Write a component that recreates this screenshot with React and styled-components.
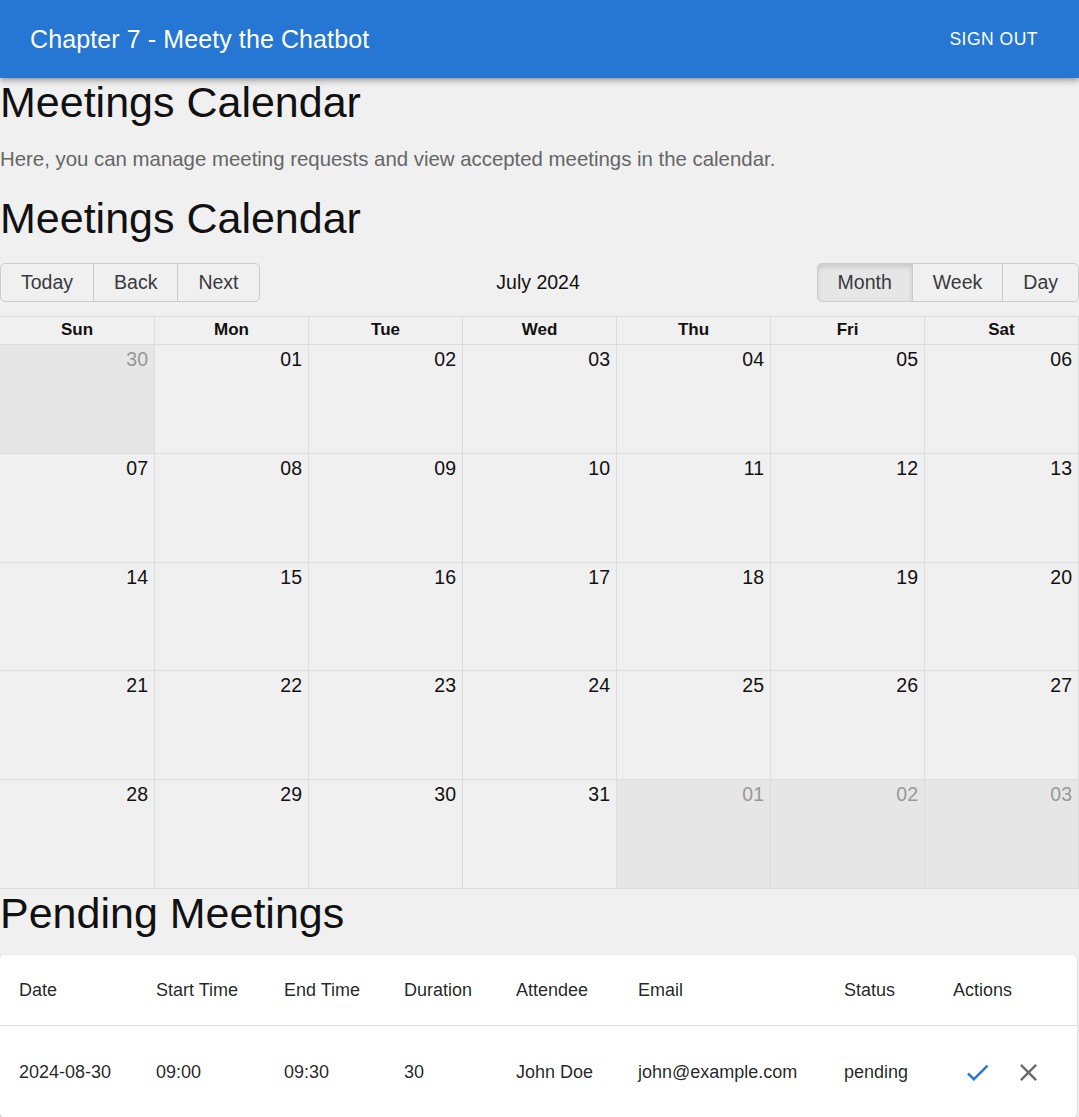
import React from 'react';
import styled, { createGlobalStyle } from 'styled-components';

const GlobalStyle = createGlobalStyle`
    *, *::before, *::after {
        box-sizing: border-box;
    }
    html, body {
        margin: 0;
        padding: 0;
        background-color: #f0f0f0;
        font-family: "Liberation Sans", Arial, sans-serif;
        color: #111;
    }
`;

const weekDays = ['Sun', 'Mon', 'Tue', 'Wed', 'Thu', 'Fri', 'Sat'];

// 5 weeks of July 2024, with days from June / August marked as off range
const buildWeeks = () => {
    const days = [{ n: 30, off: true }];
    for (let d = 1; d <= 31; d++) days.push({ n: d, off: false });
    for (let d = 1; d <= 3; d++) days.push({ n: d, off: true });
    const weeks = [];
    for (let i = 0; i < days.length; i += 7) weeks.push(days.slice(i, i + 7));
    return weeks;
};

const columns = [
    { label: 'Date', width: 137 },
    { label: 'Start Time', width: 128 },
    { label: 'End Time', width: 120 },
    { label: 'Duration', width: 112 },
    { label: 'Attendee', width: 122 },
    { label: 'Email', width: 206 },
    { label: 'Status', width: 109 },
    { label: 'Actions', width: null },
];

const meetings = [
    {
        date: '2024-08-30',
        start: '09:00',
        end: '09:30',
        duration: 30,
        attendee: 'John Doe',
        email: 'john@example.com',
        status: 'pending',
    },
];

const CheckIcon = () => (
    <svg width="29" height="29" viewBox="0 0 24 24" fill="currentColor">
        <path d="M9 16.17 4.83 12l-1.42 1.41L9 19 21 7l-1.41-1.41z" />
    </svg>
);

const CloseIcon = () => (
    <svg width="29" height="29" viewBox="0 0 24 24" fill="currentColor">
        <path d="M19 6.41 17.59 5 12 10.59 6.41 5 5 6.41 10.59 12 5 17.59 6.41 19 12 13.41 17.59 19 19 17.59 13.41 12z" />
    </svg>
);

const App = () => {
    const weeks = buildWeeks();
    return (
        <>
            <GlobalStyle />
            {/* 상단 바 */}
            <AppBar>
                <Title>Chapter 7 - Meety the Chatbot</Title>
                <SignOut>Sign out</SignOut>
            </AppBar>

            <Main>
                <PageTitle>Meetings Calendar</PageTitle>
                <Intro>Here, you can manage meeting requests and view accepted meetings in the calendar.</Intro>
                <SectionTitle>Meetings Calendar</SectionTitle>

                {/* 캘린더 툴바 */}
                <Toolbar>
                    <ButtonGroup>
                        <ToolButton>Today</ToolButton>
                        <ToolButton>Back</ToolButton>
                        <ToolButton>Next</ToolButton>
                    </ButtonGroup>
                    <ToolbarLabel>July 2024</ToolbarLabel>
                    <ButtonGroup>
                        <ToolButton $active>Month</ToolButton>
                        <ToolButton>Week</ToolButton>
                        <ToolButton>Day</ToolButton>
                    </ButtonGroup>
                </Toolbar>

                <Calendar>
                    <HeaderRow>
                        {weekDays.map((d) => (
                            <DayHeader key={d}>{d}</DayHeader>
                        ))}
                    </HeaderRow>
                    {weeks.map((week, wi) => (
                        <WeekRow key={wi}>
                            {week.map((day, di) => (
                                <DayCell key={di} $off={day.off}>
                                    {String(day.n).padStart(2, '0')}
                                </DayCell>
                            ))}
                        </WeekRow>
                    ))}
                </Calendar>

                <PendingTitle>Pending Meetings</PendingTitle>

                <TablePaper>
                    <Table>
                        <colgroup>
                            {columns.map((c) => (
                                <col key={c.label} style={c.width ? { width: c.width } : undefined} />
                            ))}
                        </colgroup>
                        <thead>
                            <tr>
                                {columns.map((c) => (
                                    <HeadCell key={c.label}>{c.label}</HeadCell>
                                ))}
                            </tr>
                        </thead>
                        <tbody>
                            {meetings.map((m) => (
                                <tr key={m.email}>
                                    <BodyCell>{m.date}</BodyCell>
                                    <BodyCell>{m.start}</BodyCell>
                                    <BodyCell>{m.end}</BodyCell>
                                    <BodyCell>{m.duration}</BodyCell>
                                    <BodyCell>{m.attendee}</BodyCell>
                                    <BodyCell>{m.email}</BodyCell>
                                    <BodyCell>{m.status}</BodyCell>
                                    <BodyCell>
                                        <Actions>
                                            <IconButton $color="#2676d3"><CheckIcon /></IconButton>
                                            <IconButton $color="#6b6b6b"><CloseIcon /></IconButton>
                                        </Actions>
                                    </BodyCell>
                                </tr>
                            ))}
                        </tbody>
                    </Table>
                </TablePaper>
            </Main>
        </>
    );
};

const AppBar = styled.header`
    height: 78px;
    background-color: #2676d3;
    color: #FFFFFF;
    display: flex;
    align-items: center;
    justify-content: space-between;
    padding: 0 30px;
    box-shadow: 0 2px 4px -1px rgba(0,0,0,0.2), 0 4px 5px 0 rgba(0,0,0,0.14), 0 1px 10px 0 rgba(0,0,0,0.12);
    position: relative;
    z-index: 2;
`;

const Title = styled.div`
    font-size: 25px;
    letter-spacing: 0.1px;
`;

const SignOut = styled.button`
    background: none;
    border: none;
    color: #FFFFFF;
    font-family: inherit;
    font-size: 17.5px;
    text-transform: uppercase;
    letter-spacing: 0.5px;
    padding: 8px 11px;
`;

const Main = styled.main`
    display: flex;
    flex-direction: column;
`;

const PageTitle = styled.h1`
    font-size: 43px;
    font-weight: 400;
    line-height: 49px;
    margin: 0;
`;

const Intro = styled.p`
    font-size: 20.4px;
    line-height: 23px;
    color: #666;
    margin: 21px 0 0 0;
`;

const SectionTitle = styled.h2`
    font-size: 43px;
    font-weight: 400;
    line-height: 49px;
    margin: 23px 0 0 0;
`;

const Toolbar = styled.div`
    display: flex;
    align-items: center;
    justify-content: space-between;
    margin-top: 20px;
    margin-bottom: 14px;
`;

const ButtonGroup = styled.div`
    display: flex;
    & > button:first-child {
        border-radius: 5px 0 0 5px;
    }
    & > button:last-child {
        border-radius: 0 5px 5px 0;
    }
    & > button + button {
        margin-left: -1px;
    }
`;

const ToolButton = styled.button`
    height: 39px;
    padding: 0 20px;
    font-family: inherit;
    font-size: 19.5px;
    color: #373a3c;
    background-color: ${(p) => (p.$active ? '#e6e6e6' : 'transparent')};
    box-shadow: ${(p) => (p.$active ? 'inset 0 3px 5px rgba(0,0,0,0.125)' : 'none')};
    border: 1px solid #ccc;
    border-radius: 0;
`;

const ToolbarLabel = styled.div`
    font-size: 19.5px;
    text-align: center;
    flex: 1;
`;

const Calendar = styled.div`
    border: 1px solid #ddd;
    border-left: none;
    display: flex;
    flex-direction: column;
`;

const HeaderRow = styled.div`
    display: grid;
    grid-template-columns: repeat(7, 1fr);
    height: 27px;
`;

const DayHeader = styled.div`
    font-weight: bold;
    font-size: 17px;
    line-height: 26px;
    text-align: center;
    & + & {
        border-left: 1px solid #ddd;
    }
`;

const WeekRow = styled.div`
    display: grid;
    grid-template-columns: repeat(7, 1fr);
    height: 108.8px;
    border-top: 1px solid #ddd;
`;

const DayCell = styled.div`
    background-color: ${(p) => (p.$off ? '#e6e6e6' : 'transparent')};
    color: ${(p) => (p.$off ? '#999' : '#111')};
    font-size: 19.5px;
    text-align: right;
    padding: 3px 6px 0 0;
    & + & {
        border-left: 1px solid #ddd;
    }
`;

const PendingTitle = styled.h2`
    font-size: 43px;
    font-weight: 400;
    line-height: 49px;
    margin: 0;
`;

const TablePaper = styled.div`
    margin-top: 17px;
    background-color: #FFFFFF;
    border-radius: 5px;
    box-shadow: 0 2px 1px -1px rgba(0,0,0,0.2), 0 1px 1px 0 rgba(0,0,0,0.14), 0 1px 3px 0 rgba(0,0,0,0.12);
    margin-right: 2px;
`;

const Table = styled.table`
    width: 100%;
    border-collapse: collapse;
    table-layout: fixed;
`;

const HeadCell = styled.th`
    text-align: left;
    font-weight: 400;
    font-size: 18px;
    color: rgba(0,0,0,0.87);
    height: 71px;
    padding: 0 19px;
    border-bottom: 1px solid #e0e0e0;
    white-space: nowrap;
`;

const BodyCell = styled.td`
    font-size: 18px;
    color: rgba(0,0,0,0.87);
    height: 92px;
    padding: 0 19px;
    white-space: nowrap;
`;

const Actions = styled.div`
    display: flex;
    gap: 2px;
`;

const IconButton = styled.button`
    background: none;
    border: none;
    padding: 10px;
    display: flex;
    color: ${(p) => p.$color};
    border-radius: 50%;
`;

export default App;
